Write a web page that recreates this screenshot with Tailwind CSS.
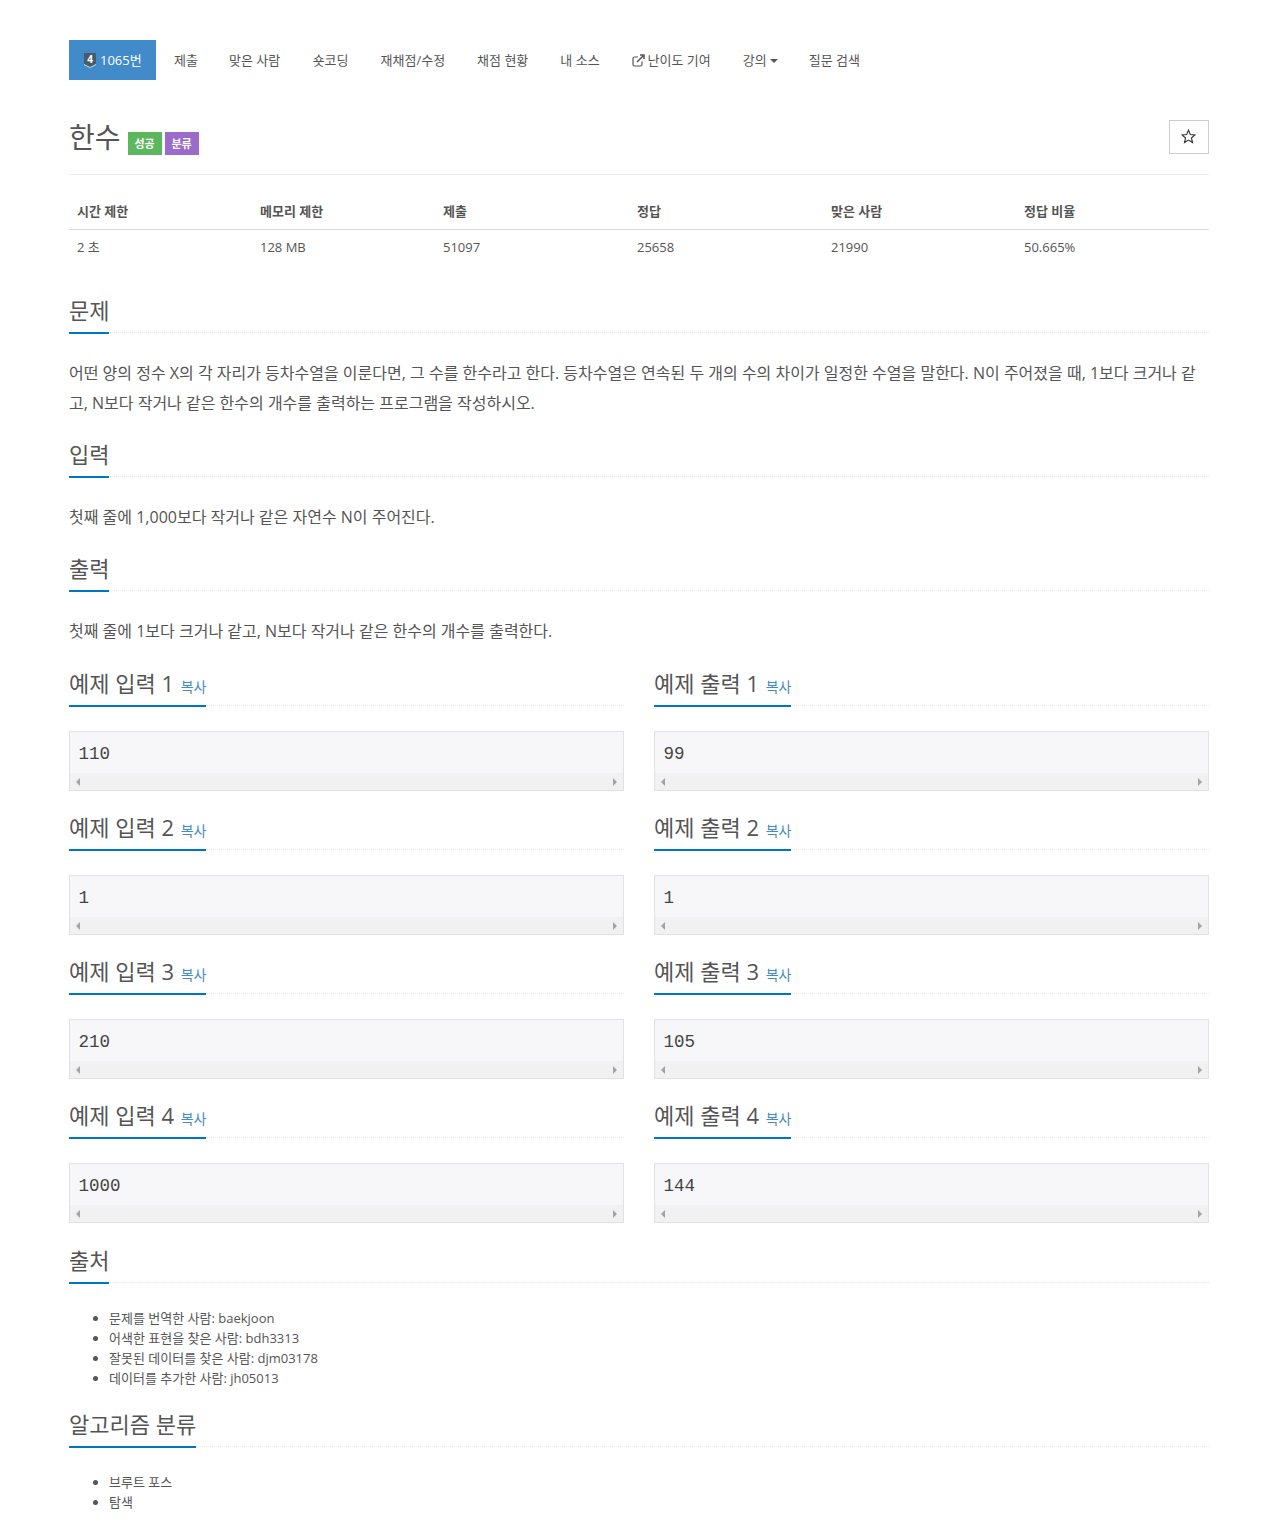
<!DOCTYPE html>
<html lang="ko">
<head>
  <meta charset="UTF-8">
  <title>1065번: 한수</title>
  <script src="https://cdn.jsdelivr.net/npm/@tailwindcss/browser@4"></script>
</head>
<body class="bg-white text-[#555] font-['Open_Sans','Noto_Sans_CJK_KR',sans-serif]">
  <div class="w-[1140px] ml-[69px] pt-10 pb-[14px]">

    <!-- tabs -->
    <nav class="flex h-10 text-[13px] leading-10">
      <a class="flex items-center gap-1 w-[87px] pl-[15px] bg-[#428bca] text-white">
        <svg class="w-[12px] h-[15px]" viewBox="0 0 12 15"><path d="M0 0h12v11l-6 4-6-4z" fill="#4a5a6a"/><path d="M0 11l6 3 6-3v1l-6 3-6-3z" fill="#d0d8e0"/><text x="6" y="10" text-anchor="middle" font-size="10" font-weight="700" fill="#fff">4</text></svg>
        1065번
      </a>
      <a class="ml-[18px]">제출</a>
      <a class="ml-[31px]">맞은 사람</a>
      <a class="ml-[32.500px]">숏코딩</a>
      <a class="ml-[32px]">재채점/수정</a>
      <a class="ml-[32px]">채점 현황</a>
      <a class="ml-[32px]">내 소스</a>
      <a class="ml-[32px] flex items-center gap-[3px]">
        <svg class="w-[13px] h-[13px]" viewBox="0 0 13 13" fill="none" stroke="#555" stroke-width="1.2"><path d="M10 7.5v3a1.5 1.5 0 0 1-1.5 1.5h-6A1.5 1.5 0 0 1 1 10.500v-6A1.500 1.500 0 0 1 2.500 3H6"/><path d="M5 8l6-6M8 1h4v4" stroke-width="1.500"/></svg>
        난이도 기여
      </a>
      <a class="ml-[32px] flex items-center gap-[3px]">강의<span class="w-0 h-0 mt-[2px] border-x-4 border-t-4 border-x-transparent border-t-[#555]"></span></a>
      <a class="ml-[31px]">질문 검색</a>
    </nav>

    <!-- title -->
    <div class="flex justify-between mt-10 h-[55px] border-b border-[#eee]">
      <div class="flex items-start">
        <h1 class="text-[28px] leading-[34px] font-normal">한수</h1>
        <span class="ml-[7px] mt-3 w-[34px] h-[23px] bg-[#5cb85c] text-white text-[11px] font-bold leading-[23px] text-center">성공</span>
        <span class="ml-[3px] mt-3 w-[34px] h-[23px] bg-[#9b6bcc] text-white text-[11px] font-bold leading-[23px] text-center">분류</span>
      </div>
      <button class="w-10 h-[34px] pr-[2px] pb-[2px] border border-[#ccc] flex items-center justify-center">
        <svg class="w-[15px] h-[15px]" viewBox="0 0 24 24" fill="none" stroke="#333" stroke-width="1.800"><path d="M12 2l2.900 6.800 7.300.7-5.500 4.900 1.700 7.200-6.400-3.800-6.400 3.800 1.700-7.200-5.500-4.900 7.300-.7z"/></svg>
      </button>
    </div>

    <!-- stats -->
    <table class="w-full mt-[19px] text-[13px] table-fixed">
      <thead>
        <tr class="h-[35px] border-b border-[#ddd] text-left font-bold">
          <th class="w-[183px] pl-2">시간 제한</th><th class="w-[183px] pl-2">메모리 제한</th><th class="w-[194px] pl-2">제출</th><th class="w-[194px] pl-2">정답</th><th class="w-[193px] pl-2">맞은 사람</th><th class="pl-2">정답 비율</th>
        </tr>
      </thead>
      <tbody>
        <tr class="h-[36px]">
          <td class="pl-2">2 초</td><td class="pl-2">128 MB</td><td class="pl-2">51097</td><td class="pl-2">25658</td><td class="pl-2">21990</td><td class="pl-2">50.665%</td>
        </tr>
      </tbody>
    </table>

    <!-- problem -->
    <div class="mt-[29px] border-b border-dotted border-[#e5e5e5] h-[39px]">
      <h2 class="w-fit h-[40px] border-b-2 border-[#0076c0] text-[22px] leading-[33px] font-normal">문제</h2>
    </div>
    <p class="mt-[25px] text-[16px] leading-[30px]">어떤 양의 정수 X의 각 자리가 등차수열을 이룬다면, 그 수를 한수라고 한다. 등차수열은 연속된 두 개의 수의 차이가 일정한 수열을 말한다. N이 주어졌을 때, 1보다 크거나 같고, N보다 작거나 같은 한수의 개수를 출력하는 프로그램을 작성하시오.</p>

    <div class="mt-5 border-b border-dotted border-[#e5e5e5] h-[39px]">
      <h2 class="w-fit h-[40px] border-b-2 border-[#0076c0] text-[22px] leading-[33px] font-normal">입력</h2>
    </div>
    <p class="mt-[25px] text-[16px] leading-[30px]">첫째 줄에 1,000보다 작거나 같은 자연수 N이 주어진다.</p>

    <div class="mt-5 border-b border-dotted border-[#e5e5e5] h-[39px]">
      <h2 class="w-fit h-[40px] border-b-2 border-[#0076c0] text-[22px] leading-[33px] font-normal">출력</h2>
    </div>
    <p class="mt-[25px] text-[16px] leading-[30px]">첫째 줄에 1보다 크거나 같고, N보다 작거나 같은 한수의 개수를 출력한다.</p>

    <!-- samples -->
    <div class="grid grid-cols-2 gap-x-[30px] gap-y-5 mt-[21px]">
      <div>
        <div class="border-b border-dotted border-[#e5e5e5] h-[39px]"><h2 class="w-fit h-[40px] border-b-2 border-[#0076c0] text-[22px] leading-[33px] font-normal">예제 입력 1 <a class="ml-[1px] text-[14px] text-[#428bca]">복사</a></h2></div>
        <div class="mt-[25px] h-[60px] border border-[#e1e1e8] bg-[#f7f7f9]"><pre class="h-[41px] px-[8.500px] pt-[9px] text-[17.500px] leading-[26px] text-[#444] font-['Liberation_Mono',monospace]">110</pre><div class="flex justify-between items-center h-[17px] bg-[#f1f1f1] px-[6px]"><span class="w-0 h-0 border-y-4 border-r-4 border-y-transparent border-r-[#a3a3a3]"></span><span class="w-0 h-0 border-y-4 border-l-4 border-y-transparent border-l-[#a3a3a3]"></span></div></div>
      </div>
      <div>
        <div class="border-b border-dotted border-[#e5e5e5] h-[39px]"><h2 class="w-fit h-[40px] border-b-2 border-[#0076c0] text-[22px] leading-[33px] font-normal">예제 출력 1 <a class="ml-[1px] text-[14px] text-[#428bca]">복사</a></h2></div>
        <div class="mt-[25px] h-[60px] border border-[#e1e1e8] bg-[#f7f7f9]"><pre class="h-[41px] px-[8.500px] pt-[9px] text-[17.500px] leading-[26px] text-[#444] font-['Liberation_Mono',monospace]">99</pre><div class="flex justify-between items-center h-[17px] bg-[#f1f1f1] px-[6px]"><span class="w-0 h-0 border-y-4 border-r-4 border-y-transparent border-r-[#a3a3a3]"></span><span class="w-0 h-0 border-y-4 border-l-4 border-y-transparent border-l-[#a3a3a3]"></span></div></div>
      </div>
      <div>
        <div class="border-b border-dotted border-[#e5e5e5] h-[39px]"><h2 class="w-fit h-[40px] border-b-2 border-[#0076c0] text-[22px] leading-[33px] font-normal">예제 입력 2 <a class="ml-[1px] text-[14px] text-[#428bca]">복사</a></h2></div>
        <div class="mt-[25px] h-[60px] border border-[#e1e1e8] bg-[#f7f7f9]"><pre class="h-[41px] px-[8.500px] pt-[9px] text-[17.500px] leading-[26px] text-[#444] font-['Liberation_Mono',monospace]">1</pre><div class="flex justify-between items-center h-[17px] bg-[#f1f1f1] px-[6px]"><span class="w-0 h-0 border-y-4 border-r-4 border-y-transparent border-r-[#a3a3a3]"></span><span class="w-0 h-0 border-y-4 border-l-4 border-y-transparent border-l-[#a3a3a3]"></span></div></div>
      </div>
      <div>
        <div class="border-b border-dotted border-[#e5e5e5] h-[39px]"><h2 class="w-fit h-[40px] border-b-2 border-[#0076c0] text-[22px] leading-[33px] font-normal">예제 출력 2 <a class="ml-[1px] text-[14px] text-[#428bca]">복사</a></h2></div>
        <div class="mt-[25px] h-[60px] border border-[#e1e1e8] bg-[#f7f7f9]"><pre class="h-[41px] px-[8.500px] pt-[9px] text-[17.500px] leading-[26px] text-[#444] font-['Liberation_Mono',monospace]">1</pre><div class="flex justify-between items-center h-[17px] bg-[#f1f1f1] px-[6px]"><span class="w-0 h-0 border-y-4 border-r-4 border-y-transparent border-r-[#a3a3a3]"></span><span class="w-0 h-0 border-y-4 border-l-4 border-y-transparent border-l-[#a3a3a3]"></span></div></div>
      </div>
      <div>
        <div class="border-b border-dotted border-[#e5e5e5] h-[39px]"><h2 class="w-fit h-[40px] border-b-2 border-[#0076c0] text-[22px] leading-[33px] font-normal">예제 입력 3 <a class="ml-[1px] text-[14px] text-[#428bca]">복사</a></h2></div>
        <div class="mt-[25px] h-[60px] border border-[#e1e1e8] bg-[#f7f7f9]"><pre class="h-[41px] px-[8.500px] pt-[9px] text-[17.500px] leading-[26px] text-[#444] font-['Liberation_Mono',monospace]">210</pre><div class="flex justify-between items-center h-[17px] bg-[#f1f1f1] px-[6px]"><span class="w-0 h-0 border-y-4 border-r-4 border-y-transparent border-r-[#a3a3a3]"></span><span class="w-0 h-0 border-y-4 border-l-4 border-y-transparent border-l-[#a3a3a3]"></span></div></div>
      </div>
      <div>
        <div class="border-b border-dotted border-[#e5e5e5] h-[39px]"><h2 class="w-fit h-[40px] border-b-2 border-[#0076c0] text-[22px] leading-[33px] font-normal">예제 출력 3 <a class="ml-[1px] text-[14px] text-[#428bca]">복사</a></h2></div>
        <div class="mt-[25px] h-[60px] border border-[#e1e1e8] bg-[#f7f7f9]"><pre class="h-[41px] px-[8.500px] pt-[9px] text-[17.500px] leading-[26px] text-[#444] font-['Liberation_Mono',monospace]">105</pre><div class="flex justify-between items-center h-[17px] bg-[#f1f1f1] px-[6px]"><span class="w-0 h-0 border-y-4 border-r-4 border-y-transparent border-r-[#a3a3a3]"></span><span class="w-0 h-0 border-y-4 border-l-4 border-y-transparent border-l-[#a3a3a3]"></span></div></div>
      </div>
      <div>
        <div class="border-b border-dotted border-[#e5e5e5] h-[39px]"><h2 class="w-fit h-[40px] border-b-2 border-[#0076c0] text-[22px] leading-[33px] font-normal">예제 입력 4 <a class="ml-[1px] text-[14px] text-[#428bca]">복사</a></h2></div>
        <div class="mt-[25px] h-[60px] border border-[#e1e1e8] bg-[#f7f7f9]"><pre class="h-[41px] px-[8.500px] pt-[9px] text-[17.500px] leading-[26px] text-[#444] font-['Liberation_Mono',monospace]">1000</pre><div class="flex justify-between items-center h-[17px] bg-[#f1f1f1] px-[6px]"><span class="w-0 h-0 border-y-4 border-r-4 border-y-transparent border-r-[#a3a3a3]"></span><span class="w-0 h-0 border-y-4 border-l-4 border-y-transparent border-l-[#a3a3a3]"></span></div></div>
      </div>
      <div>
        <div class="border-b border-dotted border-[#e5e5e5] h-[39px]"><h2 class="w-fit h-[40px] border-b-2 border-[#0076c0] text-[22px] leading-[33px] font-normal">예제 출력 4 <a class="ml-[1px] text-[14px] text-[#428bca]">복사</a></h2></div>
        <div class="mt-[25px] h-[60px] border border-[#e1e1e8] bg-[#f7f7f9]"><pre class="h-[41px] px-[8.500px] pt-[9px] text-[17.500px] leading-[26px] text-[#444] font-['Liberation_Mono',monospace]">144</pre><div class="flex justify-between items-center h-[17px] bg-[#f1f1f1] px-[6px]"><span class="w-0 h-0 border-y-4 border-r-4 border-y-transparent border-r-[#a3a3a3]"></span><span class="w-0 h-0 border-y-4 border-l-4 border-y-transparent border-l-[#a3a3a3]"></span></div></div>
      </div>
    </div>

    <!-- source -->
    <div class="mt-[21px] border-b border-dotted border-[#e5e5e5] h-[39px]">
      <h2 class="w-fit h-[40px] border-b-2 border-[#0076c0] text-[22px] leading-[33px] font-normal">출처</h2>
    </div>
    <ul class="mt-[25px] pl-10 list-disc text-[13px] leading-5">
      <li>문제를 번역한 사람: baekjoon</li>
      <li>어색한 표현을 찾은 사람: bdh3313</li>
      <li>잘못된 데이터를 찾은 사람: djm03178</li>
      <li>데이터를 추가한 사람: jh05013</li>
    </ul>

    <div class="mt-5 border-b border-dotted border-[#e5e5e5] h-[39px]">
      <h2 class="w-fit h-[40px] border-b-2 border-[#0076c0] text-[22px] leading-[33px] font-normal">알고리즘 분류</h2>
    </div>
    <ul class="mt-[25px] pl-10 list-disc text-[13px] leading-5">
      <li>브루트 포스</li>
      <li>탐색</li>
    </ul>
  </div>
</body>
</html>
